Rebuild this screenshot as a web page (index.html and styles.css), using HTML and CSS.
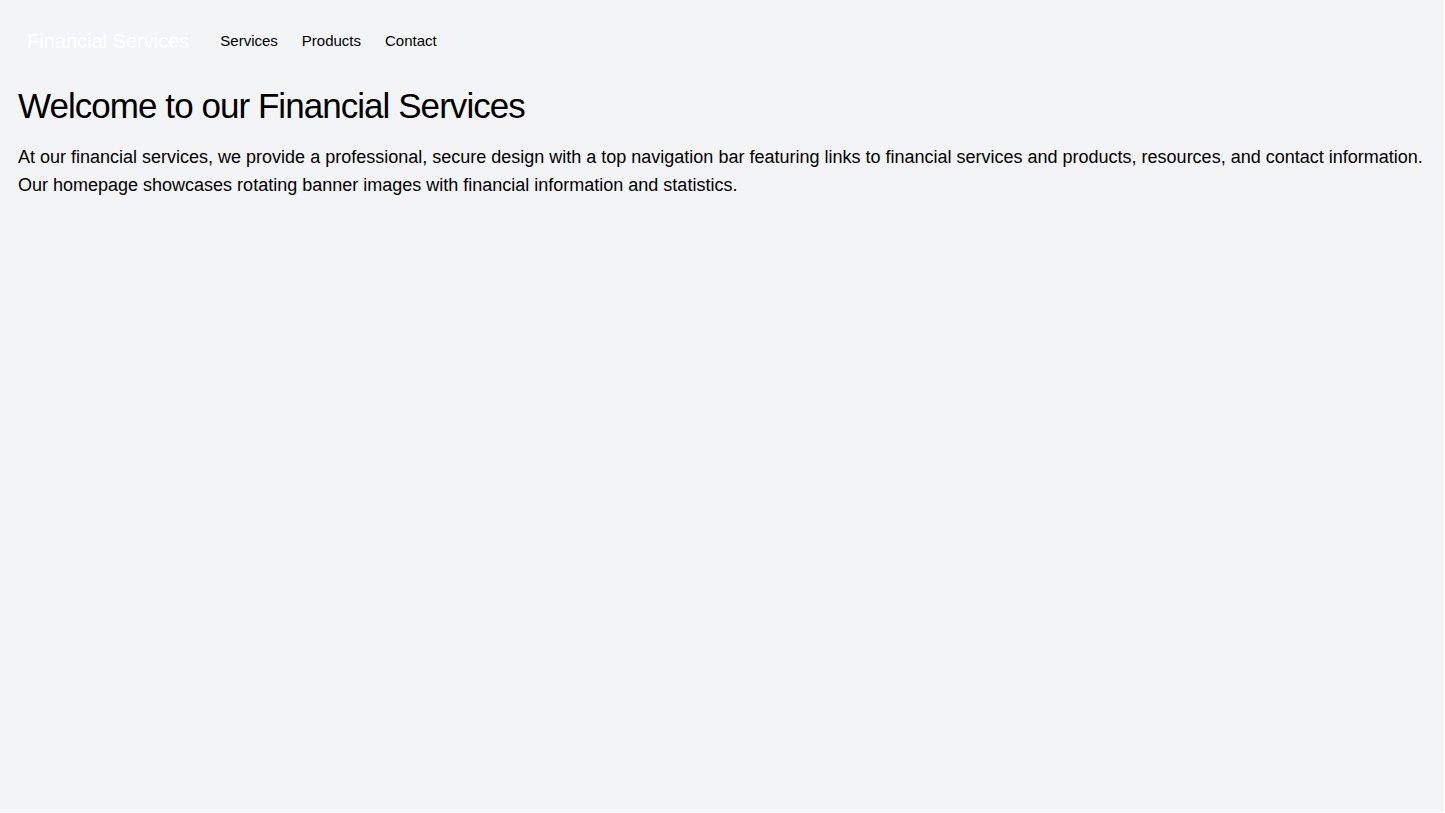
FILE: index.html
```html
<!DOCTYPE html>
<html lang="en">
<head>
<meta charset="utf-8">
<title>Financial Services</title>
<link rel="stylesheet" href="styles.css">
</head>
<body>
<div class="page">
  <nav class="nav">
    <a class="brand" href="#">Financial Services</a>
    <ul class="links">
      <li><a href="#">Services</a></li>
      <li><a href="#">Products</a></li>
      <li><a href="#">Contact</a></li>
    </ul>
  </nav>
  <main class="main">
    <h1 class="title">Welcome to our Financial Services</h1>
    <p class="lead">At our financial services, we provide a professional, secure design with a top navigation bar featuring links to financial services and products, resources, and contact information. Our homepage showcases rotating banner images with financial information and statistics.</p>
  </main>
</div>
</body>
</html>
```

FILE: styles.css
```css
html {
  background: #ffffff;
}
body {
  margin: 0 1px 1px 0;
  min-height: calc(100vh - 1px);
  background: #f3f4f6;
  color: #000;
  font-family: "Liberation Sans", Arial, sans-serif;
}
.page {
  padding: 0 16px 0 18px;
}
.nav {
  display: flex;
  align-items: center;
  padding: 27px 9px 0;
  height: 28px;
}
.brand {
  color: #ffffff;
  text-decoration: none;
  font-size: 20px;
  line-height: 28px;
}
.links {
  display: flex;
  gap: 24px;
  list-style: none;
  margin: 0 0 0 31px;
  padding: 0;
}
.links a {
  color: #000;
  text-decoration: none;
  font-size: 15px;
  line-height: 20px;
}
.main {
  padding-top: 31px;
}
.title {
  margin: 0;
  font-size: 35px;
  line-height: 40px;
  font-weight: 400;
  letter-spacing: -0.95px;
}
.lead {
  margin: 17px 0 0;
  font-size: 18px;
  line-height: 28px;
}
```
